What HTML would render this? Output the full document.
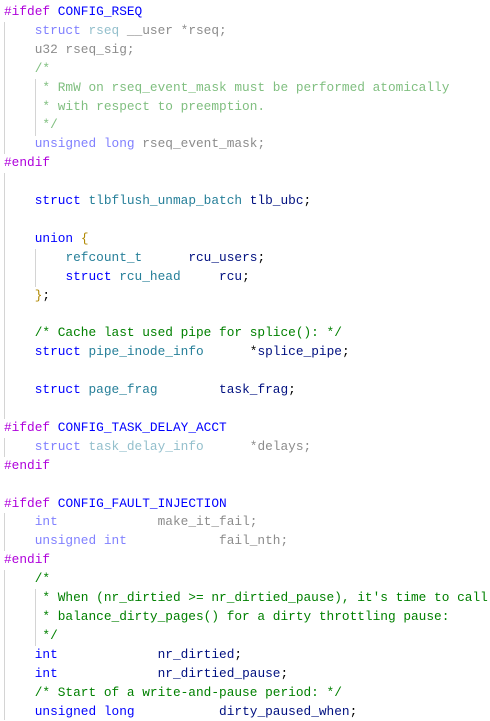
<!DOCTYPE html>
<html><head><meta charset="utf-8"><style>
body{margin:0;background:#fff;width:490px;height:720px;overflow:hidden;position:relative}
pre{margin:0;position:absolute;left:4px;top:3px;font-family:"Liberation Mono",monospace;font-size:12.8px;line-height:18.9px;color:#000}
.p{color:#af00db}.m{color:#0000ff}.k{color:#0000ff}.t{color:#267f99}.v{color:#001080}.c{color:#008000}.b{color:#b08800}
.d{color:#8c8c8c}.dk{color:#8080ff}.dt{color:#93bfcc}.dc{color:#80bf80}
.g{position:absolute;width:1px;background:#d4d4d4}
</style></head><body>
<div class="g" style="left:4px;top:22px;height:132px"></div>
<div class="g" style="left:35px;top:79px;height:57px"></div>
<div class="g" style="left:4px;top:173px;height:246px"></div>
<div class="g" style="left:35px;top:249px;height:38px"></div>
<div class="g" style="left:4px;top:438px;height:19px"></div>
<div class="g" style="left:4px;top:513px;height:38px"></div>
<div class="g" style="left:4px;top:570px;height:150px"></div>
<div class="g" style="left:35px;top:589px;height:57px"></div>
<pre><span class="p">#ifdef</span> <span class="m">CONFIG_RSEQ</span>
    <span class="dk">struct</span> <span class="dt">rseq</span> <span class="d">__user *rseq;</span>
    <span class="d">u32 rseq_sig;</span>
    <span class="dc">/*</span>
<span class="dc">     * RmW on rseq_event_mask must be performed atomically</span>
<span class="dc">     * with respect to preemption.</span>
<span class="dc">     */</span>
    <span class="dk">unsigned long</span> <span class="d">rseq_event_mask;</span>
<span class="p">#endif</span>

    <span class="k">struct</span> <span class="t">tlbflush_unmap_batch</span> <span class="v">tlb_ubc</span>;

    <span class="k">union</span> <span class="b">{</span>
        <span class="t">refcount_t</span>      <span class="v">rcu_users</span>;
        <span class="k">struct</span> <span class="t">rcu_head</span>     <span class="v">rcu</span>;
    <span class="b">}</span>;

    <span class="c">/* Cache last used pipe for splice(): */</span>
    <span class="k">struct</span> <span class="t">pipe_inode_info</span>      *<span class="v">splice_pipe</span>;

    <span class="k">struct</span> <span class="t">page_frag</span>        <span class="v">task_frag</span>;

<span class="p">#ifdef</span> <span class="m">CONFIG_TASK_DELAY_ACCT</span>
    <span class="dk">struct</span> <span class="dt">task_delay_info</span>      <span class="d">*delays;</span>
<span class="p">#endif</span>

<span class="p">#ifdef</span> <span class="m">CONFIG_FAULT_INJECTION</span>
    <span class="dk">int</span>             <span class="d">make_it_fail;</span>
    <span class="dk">unsigned int</span>            <span class="d">fail_nth;</span>
<span class="p">#endif</span>
    <span class="c">/*</span>
<span class="c">     * When (nr_dirtied &gt;= nr_dirtied_pause), it's time to call</span>
<span class="c">     * balance_dirty_pages() for a dirty throttling pause:</span>
<span class="c">     */</span>
    <span class="k">int</span>             <span class="v">nr_dirtied</span>;
    <span class="k">int</span>             <span class="v">nr_dirtied_pause</span>;
    <span class="c">/* Start of a write-and-pause period: */</span>
    <span class="k">unsigned long</span>           <span class="v">dirty_paused_when</span>;
</pre>
</body></html>
